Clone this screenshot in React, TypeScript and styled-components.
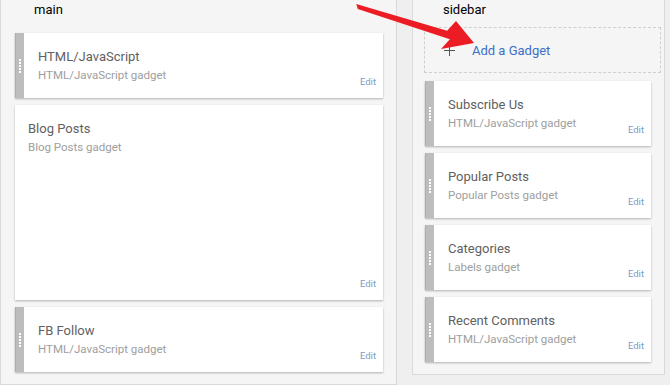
import React from 'react';
import styled, { createGlobalStyle } from 'styled-components';

const GlobalStyle = createGlobalStyle`
  * {
    box-sizing: border-box;
  }

  body {
    margin: 0;
    padding: 0;
    background: #efefef;
    font-family: Roboto, "Liberation Sans", sans-serif;
  }
`;

const Page = styled.div`
  position: relative;
  display: flex;
  align-items: flex-start;
  height: 385px;
  overflow: hidden;
`;

const Column = styled.section<{ $width: number }>`
  width: ${(p) => p.$width}px;
  background: #f5f5f5;
  border: 1px solid #d9d9d9;
  border-top: none;
`;

const MainColumn = styled(Column)`
  min-height: 385px;
  padding: 0 13px 0 14px;
`;

const SideColumn = styled(Column)`
  margin-left: 15px;
  padding: 0 3px 12px 11px;
`;

const ColumnTitle = styled.h2`
  margin: 0;
  height: 20px;
  padding-left: 19px;
  font-size: 13px;
  line-height: 20px;
  font-weight: 400;
  color: #000;
`;

const List = styled.div<{ $top: number; $inset?: number }>`
  display: flex;
  flex-direction: column;
  gap: 7px;
  margin-top: ${(p) => p.$top}px;
  margin-right: ${(p) => p.$inset ?? 0}px;
  margin-left: ${(p) => (p.$inset ? 1 : 0)}px;
`;

const AddGadget = styled.div`
  display: flex;
  align-items: center;
  gap: 17px;
  height: 46px;
  margin-top: 7px;
  padding-left: 19px;
  border: 1px dashed #cfcfcf;
  font-size: 13px;
  color: #3b6fc8;
`;

const Plus = styled.span`
  position: relative;
  width: 11px;
  height: 11px;

  &::before,
  &::after {
    content: '';
    position: absolute;
    background: #555;
  }
  &::before {
    left: 5px;
    top: 0;
    width: 1px;
    height: 11px;
  }
  &::after {
    top: 5px;
    left: 0;
    width: 11px;
    height: 1px;
  }
`;

const Card = styled.div<{ $height: number }>`
  display: flex;
  height: ${(p) => p.$height}px;
  background: #fff;
  box-shadow: 0 1px 2px rgba(0, 0, 0, 0.28);
`;

const Handle = styled.div`
  flex: 0 0 9px;
  display: flex;
  align-items: center;
  justify-content: center;
  background: #bdbdbd;
  border-left: 1px solid #adadad;
`;

const Grip = styled.span`
  width: 2px;
  height: 14px;
  background: repeating-linear-gradient(
    to bottom,
    #fff 0 2px,
    transparent 2px 3px
  );
`;

const Body = styled.div<{ $pad: number }>`
  flex: 1;
  display: grid;
  grid-template-columns: 1fr auto;
  grid-template-rows: auto auto 1fr;
  padding: 16px 7px 10px ${(p) => p.$pad}px;
`;

const Title = styled.div`
  font-size: 13px;
  line-height: 16px;
  color: #616161;
`;

const Subtitle = styled.div`
  margin-top: 3px;
  font-size: 11.5px;
  line-height: 14px;
  color: #9e9e9e;
`;

const Edit = styled.a`
  grid-column: 2;
  grid-row: 1 / -1;
  align-self: end;
  font-size: 9.5px;
  line-height: 12px;
  color: #7b9ccb;
`;

const Arrow = styled.svg`
  position: absolute;
  left: 0;
  top: 0;
  pointer-events: none;
`;

type Gadget = { title: string; sub: string; height?: number; locked?: boolean };

const mainGadgets: Gadget[] = [
  { title: 'HTML/JavaScript', sub: 'HTML/JavaScript gadget' },
  { title: 'Blog Posts', sub: 'Blog Posts gadget', height: 195, locked: true },
  { title: 'FB Follow', sub: 'HTML/JavaScript gadget' },
];

const sideGadgets: Gadget[] = [
  { title: 'Subscribe Us', sub: 'HTML/JavaScript gadget' },
  { title: 'Popular Posts', sub: 'Popular Posts gadget' },
  { title: 'Categories', sub: 'Labels gadget' },
  { title: 'Recent Comments', sub: 'HTML/JavaScript gadget' },
];

const GadgetCard = ({ g }: { g: Gadget }) => (
  <Card $height={g.height ?? 65}>
    {!g.locked && (
      <Handle>
        <Grip />
      </Handle>
    )}
    <Body $pad={g.locked ? 13 : 14}>
      <Title>{g.title}</Title>
      <Subtitle>{g.sub}</Subtitle>
      <Edit>Edit</Edit>
    </Body>
  </Card>
);

export default function App() {
  return (
    <>
      <GlobalStyle />
      <Page>
        <MainColumn $width={397}>
          <ColumnTitle>main</ColumnTitle>
          <List $top={13}>
            {mainGadgets.map((g, i) => (
              <GadgetCard key={`main-${i}`} g={g} />
            ))}
          </List>
        </MainColumn>

        <SideColumn $width={253}>
          <ColumnTitle>sidebar</ColumnTitle>
          <AddGadget>
            <Plus />
            <span>Add a Gadget</span>
          </AddGadget>
          <List $top={8} $inset={10}>
            {sideGadgets.map((g, i) => (
              <GadgetCard key={`side-${i}`} g={g} />
            ))}
          </List>
        </SideColumn>

        {/* red pointer drawn over the page */}
        <Arrow width="670" height="385" viewBox="0 0 670 385">
          <polygon
            points="356.2,4.1 447.1,30.7 456,21 474,43 441,49 449.9,39.3 357.8,8.9"
            fill="#ec1c24"
          />
        </Arrow>
      </Page>
    </>
  );
}
